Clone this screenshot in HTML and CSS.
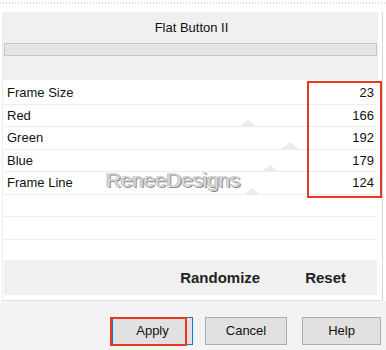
FILE: index.html
```html
<!DOCTYPE html>
<html>
<head>
    <meta name="viewport" content="width=device-width, initial-scale=1">
    <link rel="stylesheet" href="styles.css">
</head>
<body>

<div class="strip"></div>

<div class="dialog">
    <div class="head">
        <div class="title">Flat Button II</div>
        <div class="bar"></div>
    </div>

    <div class="params">
        <div class="row"><span>Frame Size</span><span>23</span></div>
        <div class="row"><span>Red</span><span>166</span></div>
        <div class="row"><span>Green</span><span>192</span></div>
        <div class="row"><span>Blue</span><span>179</span></div>
        <div class="row"><span>Frame Line</span><span>124</span></div>
        <div class="row"></div>
        <div class="row"></div>

        <div class="peak p1"></div>
        <div class="peak p2"></div>
        <div class="peak p3"></div>
        <div class="peak p4"></div>
        <div class="mark">ReneeDesigns</div>
        <div class="highlight"></div>
    </div>

    <div class="tools">
        <span class="randomize">Randomize</span>
        <span class="reset">Reset</span>
    </div>
</div>

<div class="footer">
    <div class="btn apply">Apply<div class="highlight-btn"></div></div>
    <div class="btn cancel">Cancel</div>
    <div class="btn help">Help</div>
</div>

</body>
</html>
```

FILE: styles.css
```css
body {
  margin: 0;
  font-family: "Liberation Sans", Arial, Helvetica, sans-serif;
  font-size: 13px;
  color: #111;
  background: #fff;
  width: 386px;
  height: 350px;
  overflow: hidden;
}
* {
  box-sizing: border-box;
}

/* dotted line on top of the capture */
.strip {
  height: 12px;
  padding-top: 2px;
}
.strip:after {
  content: "";
  display: block;
  height: 2px;
  background: repeating-linear-gradient(90deg, #dcdcdc 0 1px, transparent 1px 3px);
}

.dialog {
  margin-left: 2px;
  width: 381px;
  border-left: 1px solid #ececec;
  border-right: 1px solid #d6d6d6;
  border-bottom: 1px solid #e2e2e2;
  padding-bottom: 5px;
}

.head {
  height: 68px;
  margin-right: 4px;
  background: #f0f0f0;
}

.title {
  height: 31px;
  line-height: 32px;
  text-align: center;
  padding-left: 2px;
}

.bar {
  height: 13px;
  margin: 0 1px 0 1px;
  border: 1px solid #c6c6c6;
  background: #e4e4e4;
}

.params {
  position: relative;
  height: 180px;
  padding-top: 2px;
}

.row {
  display: flex;
  justify-content: space-between;
  align-items: center;
  height: 22.5px;
  margin: 0 5px 0 1px;
  padding: 0 3px 0 3px;
  border-bottom: 1px solid #ececec;
}

.peak {
  position: absolute;
  width: 0;
  height: 0;
  border-left: 9px solid transparent;
  border-right: 9px solid transparent;
  border-bottom: 7px solid #ececec;
}
.p1 { left: 236px; top: 40px; }
.p2 { left: 278px; top: 62px; }
.p3 { left: 258px; top: 85px; }
.p4 { left: 240px; top: 108px; }

.mark {
  position: absolute;
  left: 103px;
  top: 88px;
  font-size: 21px;
  color: #d9d9d9;
  letter-spacing: -0.3px;
  text-shadow: 1px 1px 0 #8a8a8a, -1px 0 0 #bdbdbd;
}

.highlight {
  position: absolute;
  left: 304px;
  top: 1px;
  width: 75px;
  height: 117px;
  border: 2px solid #e8391f;
}

.tools {
  display: flex;
  justify-content: flex-end;
  align-items: center;
  height: 35px;
  margin: 0 5px 0 1px;
  background: #f0f0f0;
  font-weight: bold;
  font-size: 15px;
  color: #222;
}
.randomize {
  margin-right: 45px;
}
.reset {
  margin-right: 31px;
}

.footer {
  display: flex;
  justify-content: flex-end;
  padding: 16px 5px 0 0;
  height: 50px;
  background: #f3f3f3;
}

.btn {
  position: relative;
  height: 28px;
  line-height: 26px;
  text-align: center;
  background: #e1e1e1;
  border: 1px solid #adadad;
  color: #111;
}
.apply {
  width: 81px;
  margin-right: 12px;
  border-color: #0a78d7;
}
.cancel {
  width: 82px;
  margin-right: 15px;
}
.help {
  width: 79px;
}

.highlight-btn {
  position: absolute;
  left: -3px;
  top: -1px;
  width: 77px;
  height: 29px;
  border: 2px solid #e8391f;
}
```
